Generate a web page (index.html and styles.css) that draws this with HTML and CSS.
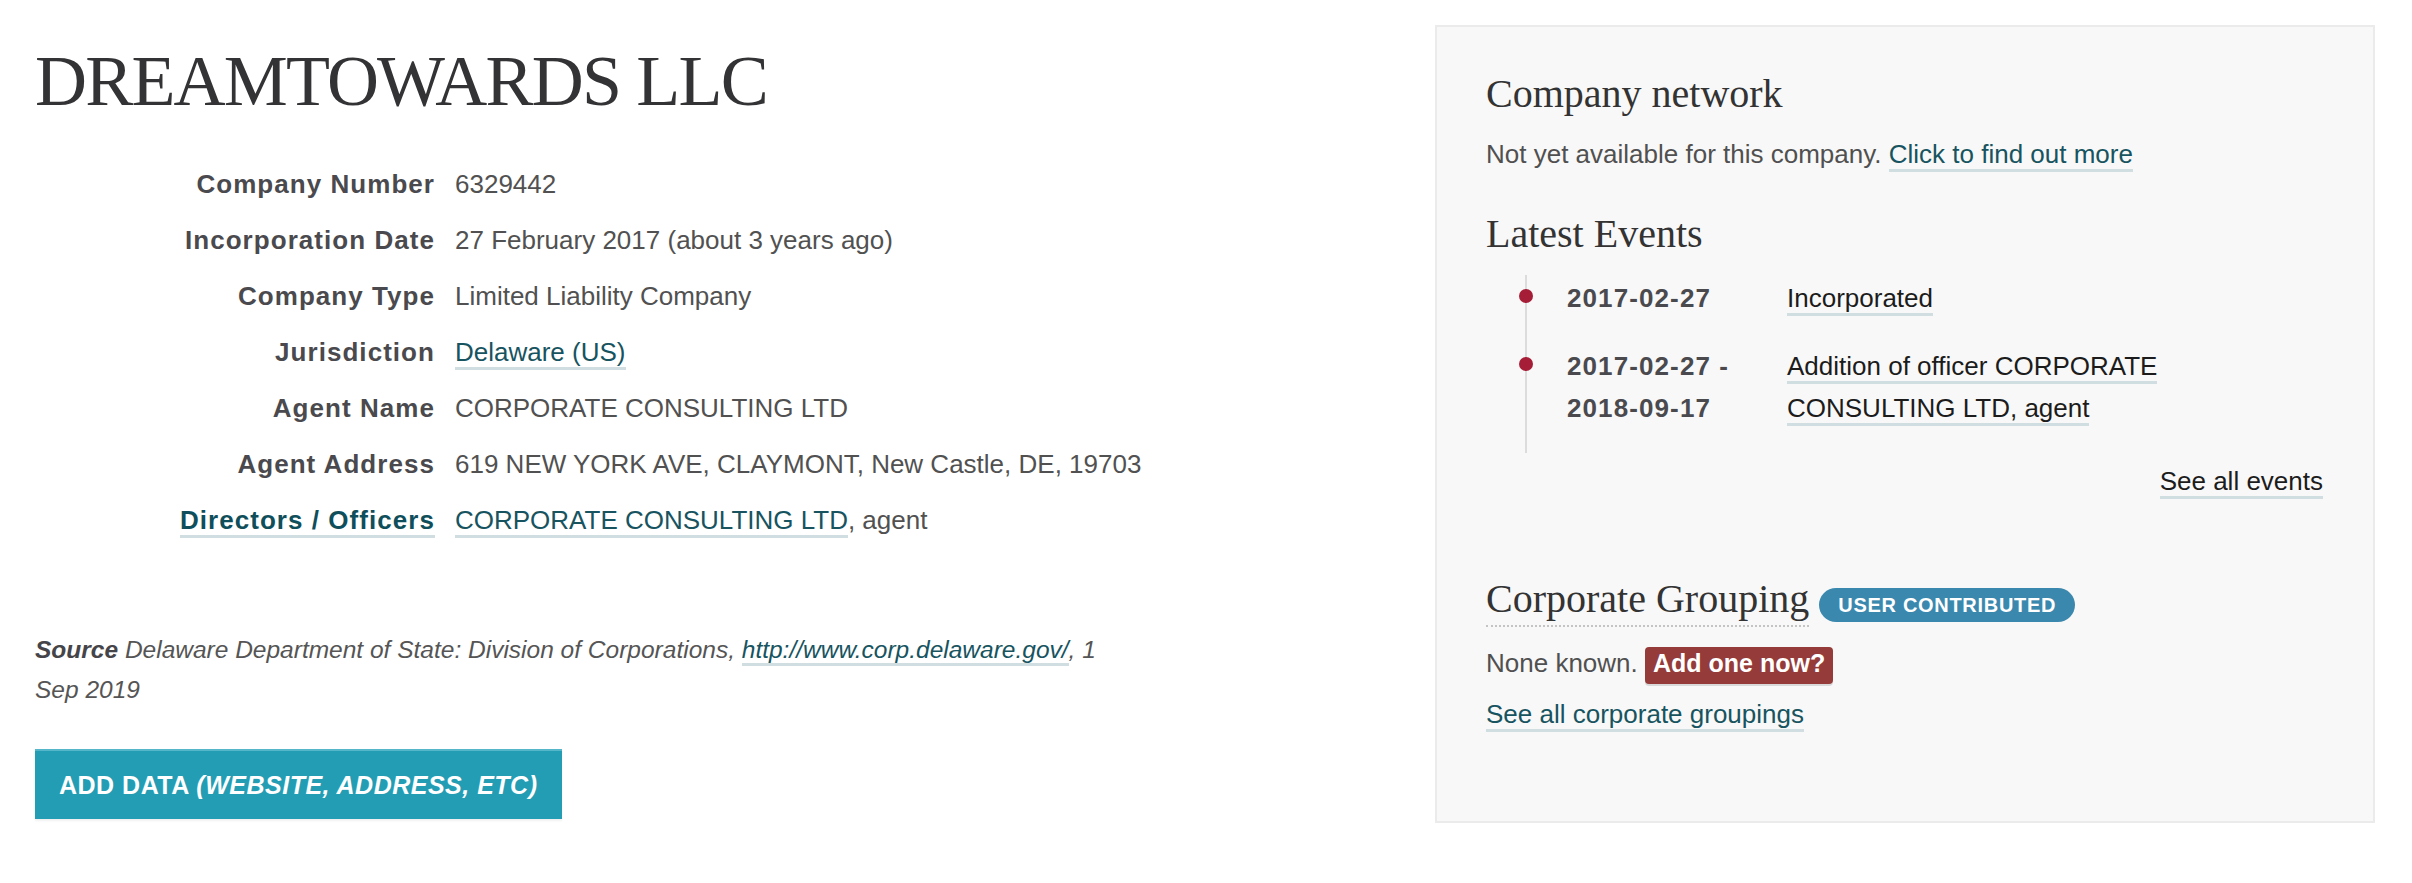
FILE: index.html
```html
<!DOCTYPE html>
<html lang="en">
<head>
<meta charset="utf-8">
<title>DREAMTOWARDS LLC</title>
<link rel="stylesheet" href="styles.css">
</head>
<body>
<div class="page">
  <main class="main">
    <h1 class="title">DREAMTOWARDS LLC</h1>
    <dl class="attrs">
      <dt>Company Number</dt><dd>6329442</dd>
      <dt>Incorporation Date</dt><dd>27 February 2017 (about 3 years ago)</dd>
      <dt>Company Type</dt><dd>Limited Liability Company</dd>
      <dt>Jurisdiction</dt><dd><a class="link" href="#">Delaware (US)</a></dd>
      <dt>Agent Name</dt><dd>CORPORATE CONSULTING LTD</dd>
      <dt>Agent Address</dt><dd>619 NEW YORK AVE, CLAYMONT, New Castle, DE, 19703</dd>
      <dt><a class="link link-bold" href="#">Directors / Officers</a></dt><dd><a class="link" href="#">CORPORATE CONSULTING LTD</a>, agent</dd>
    </dl>
    <p class="source"><b>Source</b> <span>Delaware Department of State: Division of Corporations,</span> <a class="link" href="#">http://www.corp.delaware.gov/</a><span>, 1</span> <span>Sep 2019</span></p>
    <a class="add-data" href="#">ADD DATA <i>(WEBSITE, ADDRESS, ETC)</i></a>
  </main>

  <aside class="sidebar">
    <h2 class="side-heading">Company network</h2>
    <p class="side-text net-text">Not yet available for this company. <a class="link" href="#">Click to find out more</a></p>

    <h2 class="side-heading events-heading">Latest Events</h2>
    <div class="events">
      <div class="event">
        <span class="dot"></span>
        <div class="event-date">2017-02-27</div>
        <div class="event-desc"><a class="ev-link" href="#">Incorporated</a></div>
      </div>
      <div class="event">
        <span class="dot"></span>
        <div class="event-date">2017-02-27 -<br>2018-09-17</div>
        <div class="event-desc"><a class="ev-link" href="#">Addition of officer CORPORATE CONSULTING LTD, agent</a></div>
      </div>
    </div>
    <p class="see-all"><a class="ev-link" href="#">See all events</a></p>

    <h2 class="side-heading grouping-heading"><span class="dotted">Corporate Grouping</span> <span class="badge-info">USER CONTRIBUTED</span></h2>
    <p class="side-text none-known">None known. <a class="badge-red" href="#">Add one now?</a></p>
    <p class="side-text all-groupings"><a class="link" href="#">See all corporate groupings</a></p>
  </aside>
</div>
</body>
</html>
```

FILE: styles.css
```css
* { box-sizing: border-box; }

html, body {
  margin: 0;
  padding: 0;
  background: #ffffff;
}

body {
  font-family: "Liberation Sans", Arial, sans-serif;
  font-size: 26px;
  color: #505050;
}

.page {
  display: flex;
  align-items: flex-start;
  gap: 330px;
  padding: 25px 37px 0 35px;
}

.main {
  width: 1070px;
  flex: 0 0 1070px;
}

.title {
  margin: 18px 0 0 0;
  font-family: "Liberation Serif", "Times New Roman", serif;
  font-weight: normal;
  font-size: 72px;
  line-height: 77px;
  letter-spacing: -1.8px;
  color: #333336;
}

.attrs {
  display: grid;
  grid-template-columns: 400px 1fr;
  column-gap: 20px;
  margin: 36px 0 0 0;
  line-height: 56px;
}

.attrs dt {
  text-align: right;
  font-weight: bold;
  color: #4a4a4e;
  letter-spacing: 1.05px;
  white-space: nowrap;
}

.attrs dd {
  margin: 0;
  color: #515151;
  white-space: nowrap;
}

.link {
  color: #17545f;
  text-decoration: none;
  border-bottom: 3px solid #d0dde1;
}

.link-bold {
  font-weight: bold;
  color: #0f4f5b;
}

.source {
  margin: 82px 0 0 0;
  font-size: 24.5px;
  line-height: 40px;
  font-style: italic;
  color: #555555;
}

.source b {
  color: #454549;
}

.add-data {
  display: inline-block;
  margin-top: 39px;
  height: 70px;
  padding: 0 24px;
  line-height: 68px;
  border-top: 2px solid #56b6c9;
  background: #229db4;
  color: #ffffff;
  font-weight: bold;
  font-size: 25px;
  letter-spacing: 0.5px;
  text-decoration: none;
  box-shadow: 0 2px 2px rgba(0, 0, 0, 0.06);
}

.sidebar {
  width: 940px;
  flex: 0 0 940px;
  background: #f8f8f8;
  border: 2px solid #ebebeb;
  padding: 42.5px 50px 87px 49px;
  line-height: 40px;
}

.side-heading {
  margin: 0;
  font-family: "Liberation Serif", "Times New Roman", serif;
  font-weight: normal;
  font-size: 40px;
  line-height: 48px;
  color: #333333;
}

.side-text {
  margin: 0;
  color: #505050;
}

.net-text { margin-top: 16.5px; }

.events-heading { margin-top: 35.5px; }

.events {
  position: relative;
  margin-top: 17.5px;
  padding: 2px 0 24px 81px;
}

.events::before {
  content: "";
  position: absolute;
  left: 39px;
  top: 0;
  bottom: 0;
  width: 2px;
  background: #dcdcdc;
}

.event {
  position: relative;
  display: grid;
  grid-template-columns: 220px 1fr;
  line-height: 42px;
}

.event + .event { margin-top: 26px; }

.dot {
  position: absolute;
  left: -48px;
  top: 12px;
  width: 14px;
  height: 14px;
  border-radius: 50%;
  background: #a51d36;
}

.event-date {
  font-weight: bold;
  color: #4a4a4e;
  letter-spacing: 1.1px;
}

.event-desc {
  color: #1c1c1c;
}

.ev-link {
  color: #1c1c1c;
  text-decoration: none;
  border-bottom: 3px solid #d0dde1;
}

.see-all {
  margin: 8px 0 0 0;
  text-align: right;
}

.grouping-heading { margin-top: 73.5px; }

.dotted {
  padding-bottom: 4px;
  border-bottom: 2px dotted #c4c4c4;
}

.badge-info {
  display: inline-block;
  vertical-align: baseline;
  height: 34px;
  padding: 0 19px;
  line-height: 34px;
  border-radius: 17px;
  background: #3b88ae;
  color: #ffffff;
  font-family: "Liberation Sans", Arial, sans-serif;
  font-weight: bold;
  font-size: 20px;
  letter-spacing: 0.7px;
}

.none-known { margin-top: 20.5px; }

.badge-red {
  display: inline-block;
  padding: 0 8px 4px 8px;
  line-height: 33px;
  border-radius: 4px;
  background: #953b39;
  color: #ffffff;
  font-weight: bold;
  font-size: 25px;
  text-decoration: none;
  box-shadow: 0 2px 0 rgba(0, 0, 0, 0.12);
}

.all-groupings { margin-top: 9.5px; }
```
